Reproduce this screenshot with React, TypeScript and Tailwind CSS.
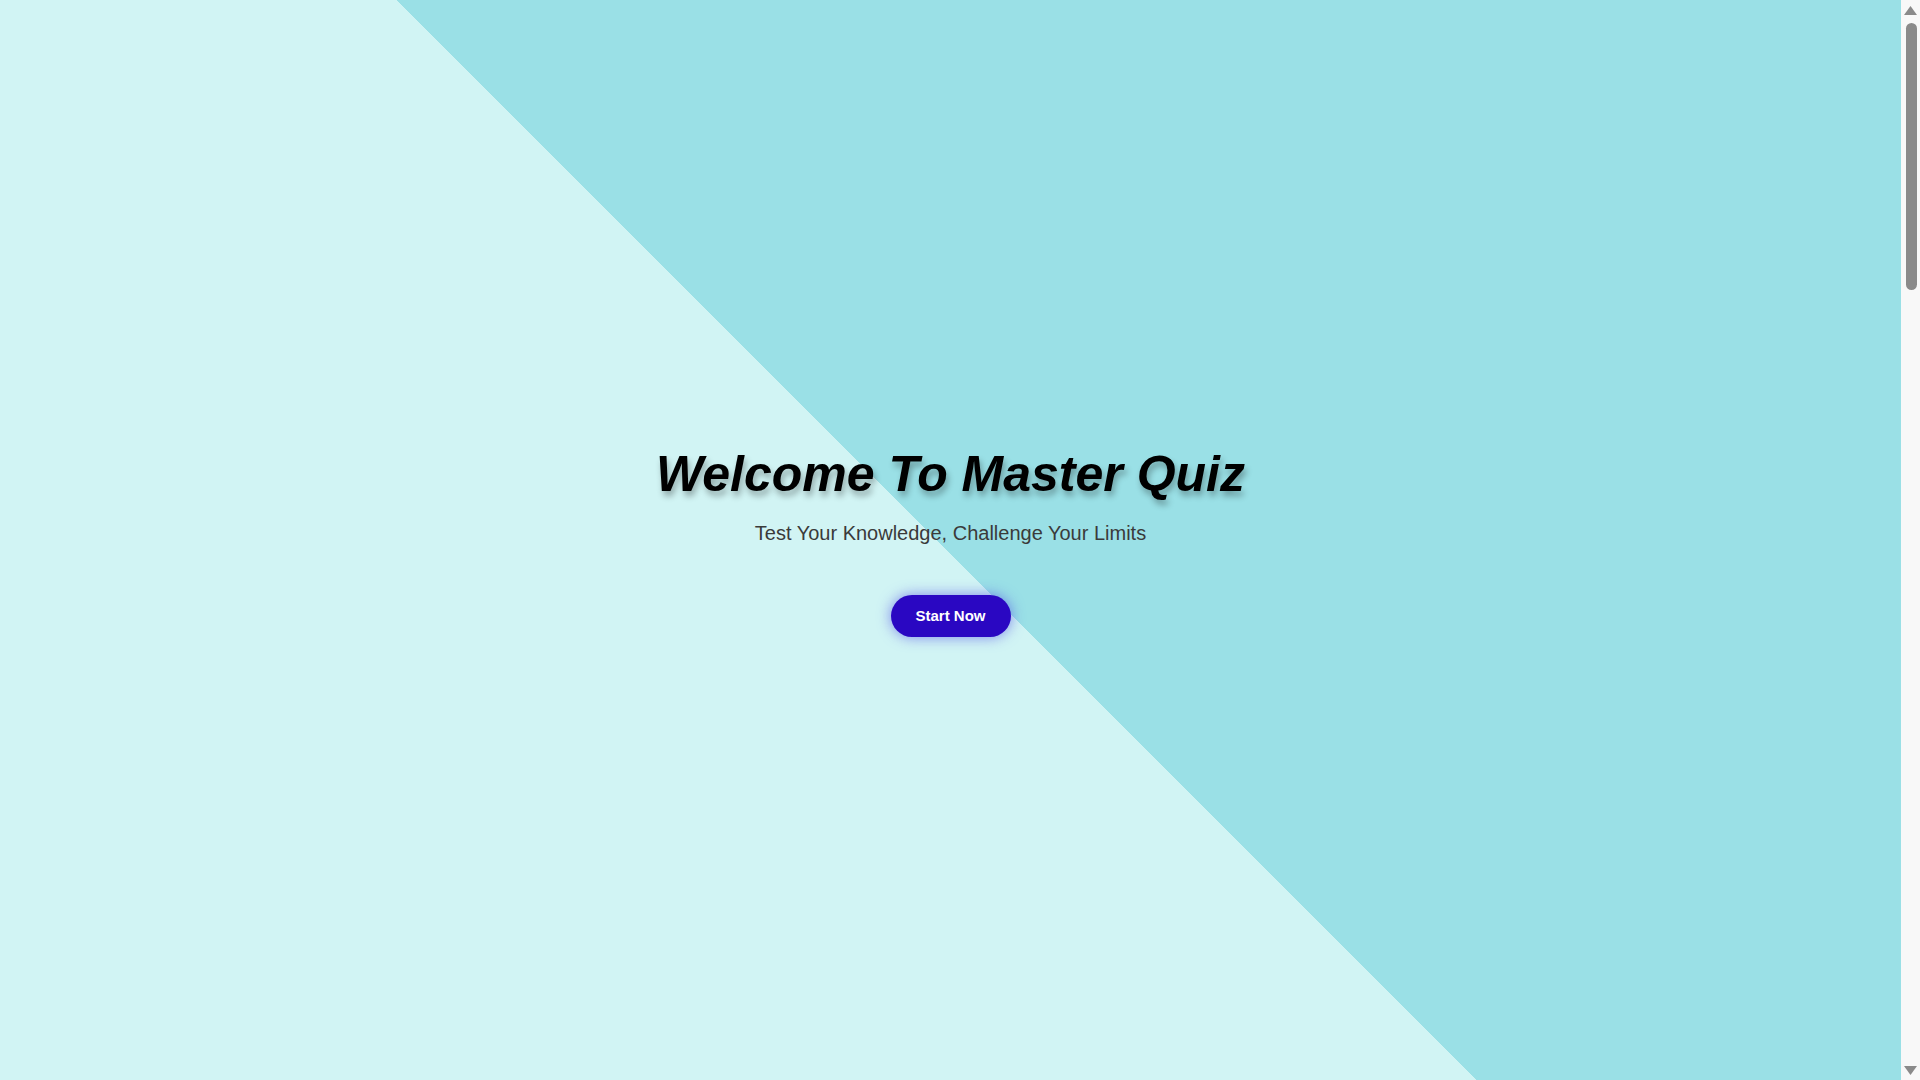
import React from "react";

// Right-hand strip that mirrors the browser scrollbar seen in the screenshot
const ScrollStrip = () => (
  <div className="w-[19px] h-full bg-[#f8f8f8] flex flex-col items-center">
    <svg width="19" height="18" viewBox="0 0 19 18" className="shrink-0">
      <path d="M3 15 L9.5 6 L16 15 Z" fill="#8a8a8a" />
    </svg>
    <div className="mt-[5px] ml-[2px] w-[11px] h-[267px] rounded-full bg-[#8a8a8a]" />
    <div className="flex-1" />
    <svg width="19" height="18" viewBox="0 0 19 18" className="shrink-0">
      <path d="M3 4 L16 4 L9.5 13 Z" fill="#8a8a8a" />
    </svg>
  </div>
);

const App = () => {
  return (
    <div className="h-screen w-full overflow-hidden flex font-['Liberation_Sans',Arial,sans-serif]">
      {/* Hero */}
      <section className="flex-1 h-full pt-[6px] flex flex-col items-center justify-center bg-[linear-gradient(45deg,#d1f4f4_calc(50%-10px),#9ae0e6_calc(50%-10px))]">
        <h1 className="text-[50px] leading-none font-bold italic text-black [text-shadow:2px_5px_6px_rgba(0,0,0,0.3)]">
          Welcome To Master Quiz
        </h1>
        <p className="mt-5 text-xl leading-7 text-[#3a3a3a]">
          Test Your Knowledge, Challenge Your Limits
        </p>
        <button className="mt-12 h-[42px] w-[120px] rounded-full bg-[#2a07c2] text-[15px] font-bold text-white shadow-[0_0_14px_rgba(70,60,230,0.6)]">
          Start Now
        </button>
      </section>
      <ScrollStrip />
    </div>
  );
};

export default App;
